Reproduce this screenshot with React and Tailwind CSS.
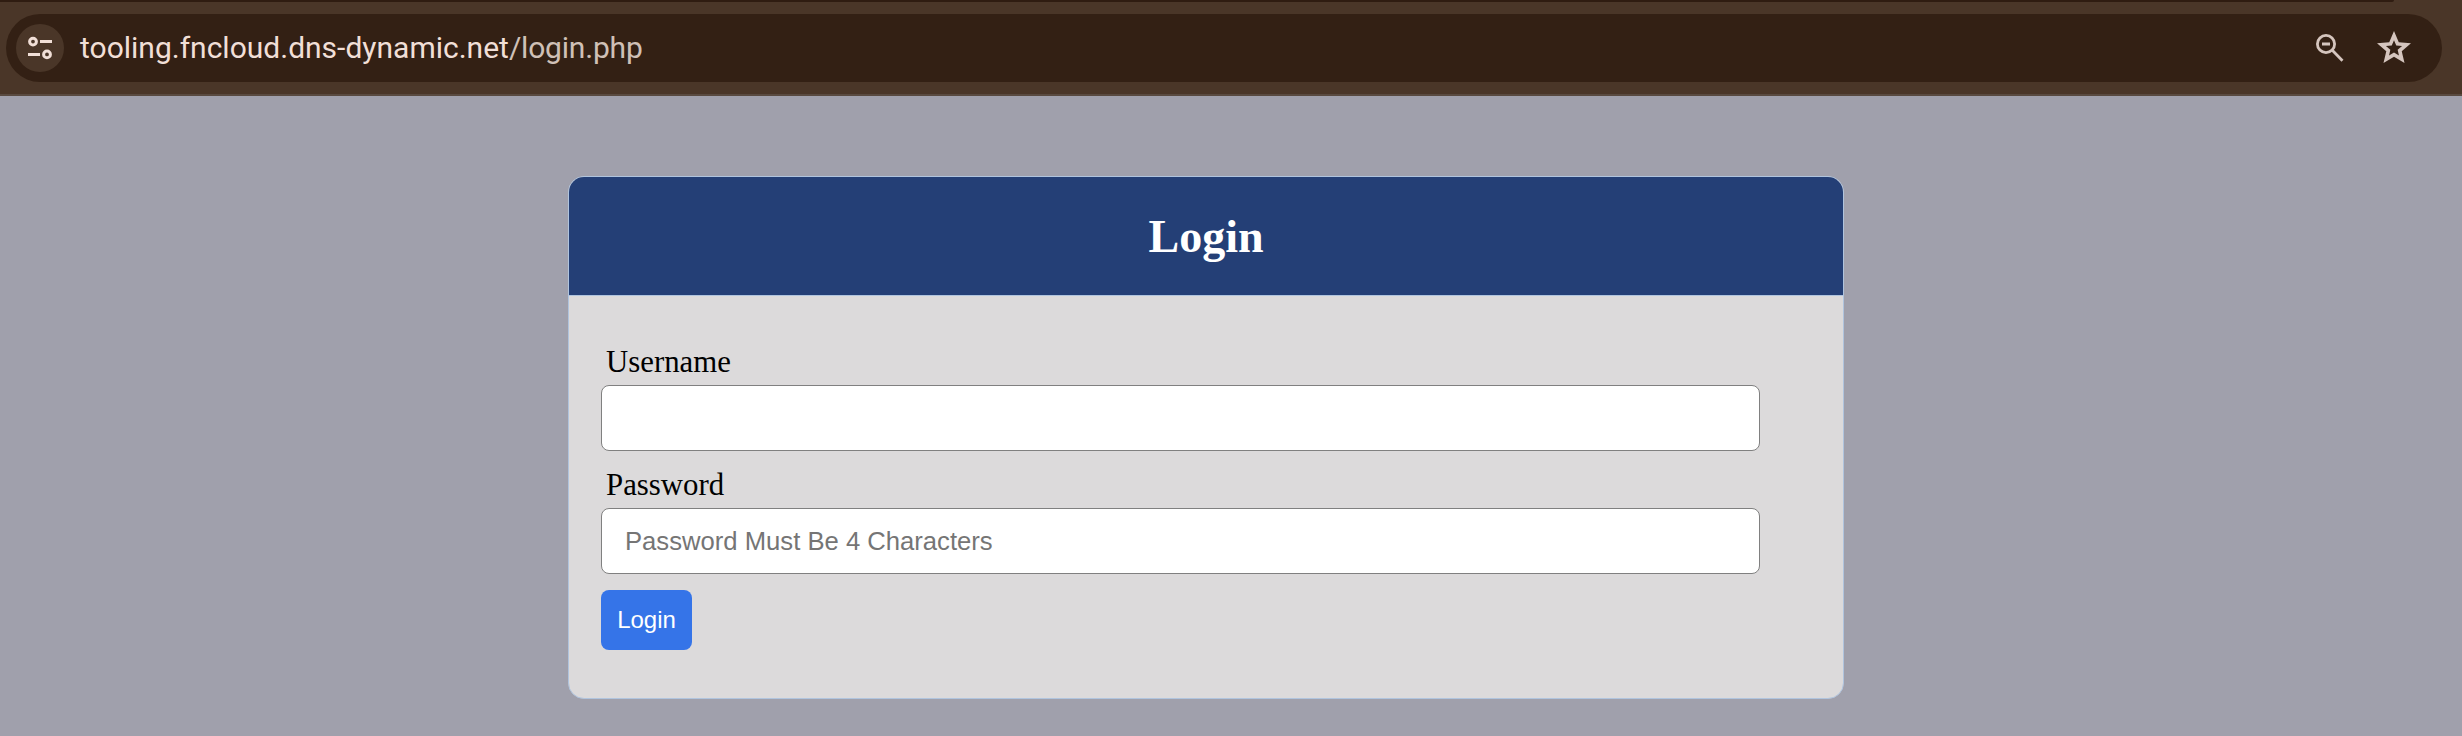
function TuneIcon() {
  return (
    <svg viewBox="0 0 24 24" className="size-6" fill="none" stroke="#f1dfd7" strokeWidth="3">
      <circle cx="5" cy="5.6" r="3.4" />
      <path d="M12 5.6H24M0 18.4h12" />
      <circle cx="19" cy="18.4" r="3.4" />
    </svg>
  );
}

function ZoomOutIcon() {
  return (
    <svg viewBox="0 0 28 28" className="size-7" fill="none" stroke="#d5c5be" strokeWidth="2.8">
      <circle cx="10" cy="10" r="8.6" />
      <path d="M6 10h8M16.3 16.3l10.2 10.4" />
    </svg>
  );
}

function StarIcon() {
  return (
    <svg viewBox="2 2 20 19" className="h-8 w-[34px]" fill="#d5c5be" fillRule="evenodd" preserveAspectRatio="none">
      <path d="M22 9.24l-7.19-.62L12 2 9.19 8.63 2 9.24l5.46 4.73L5.82 21 12 17.27 18.18 21l-1.63-7.03L22 9.24zM12 14.7L9.08 16.5 9.85 13.15 7.25 10.89 10.67 10.6 12 7.43 13.33 10.6 16.75 10.89 14.15 13.15 14.92 16.5z" />
    </svg>
  );
}

function AddressBar() {
  return (
    <header className="flex h-24 flex-col border-b-2 border-[#594a40] bg-[#4a3628]">
      <div className="h-0.5 w-[2394px] rounded-br-[2px] bg-[#2f1c11]" />
      <div className="mt-3 ml-1.5 flex h-[68px] w-[2436px] items-center rounded-full bg-[#332014] pr-[31px] pl-2.5">
        <div className="flex size-12 items-center justify-center rounded-full bg-[#4a3628]">
          <TuneIcon />
        </div>
        <div className="ml-4 flex-1 font-['Roboto',sans-serif] text-[30px] leading-[34px] whitespace-nowrap text-[#f1dfd7]">
          tooling.fncloud.dns-dynamic.net<span className="tracking-[-0.2px] text-[#d0c0b7]">/login.php</span>
        </div>
        <ZoomOutIcon />
        <div className="mb-0.5 ml-[33px]">
          <StarIcon />
        </div>
      </div>
    </header>
  );
}

function Field({ id, label, type, placeholder }) {
  return (
    <div className="mb-4 flex h-[107px] flex-col">
      <label htmlFor={id} className="h-[41px] pl-[5px] font-['Liberation_Serif',serif] text-[30.8px] leading-[36px] text-black">
        {label}
      </label>
      <input
        id={id}
        type={type}
        placeholder={placeholder}
        className="h-[66px] w-[1159px] rounded-lg border border-[#808080] bg-white px-[23px] font-['Liberation_Sans',sans-serif] text-[25.65px] placeholder:text-[#757575]"
      />
    </div>
  );
}

export default function App() {
  return (
    <div className="h-[736px] overflow-hidden bg-[#a0a0ac]">
      <AddressBar />
      <main className="mt-20 ml-[568px] h-[523px] w-[1276px] overflow-hidden rounded-2xl border border-[#b0c4de] bg-[#dcdadb]">
        <div className="flex h-[119px] items-center justify-center border-b border-[#b0c4de] bg-[#243f76] font-['Liberation_Serif',serif] text-[46px] font-bold text-white">
          <h1>Login</h1>
        </div>
        <form className="flex flex-col items-start pt-12 pl-8">
          <Field id="username" label="Username" type="text" />
          <Field id="password" label="Password" type="password" placeholder="Password Must Be 4 Characters" />
          <button type="button" className="h-[60px] w-[91px] rounded-lg bg-[#3574e8] font-['Liberation_Sans',sans-serif] text-2xl text-white">
            Login
          </button>
        </form>
      </main>
    </div>
  );
}
